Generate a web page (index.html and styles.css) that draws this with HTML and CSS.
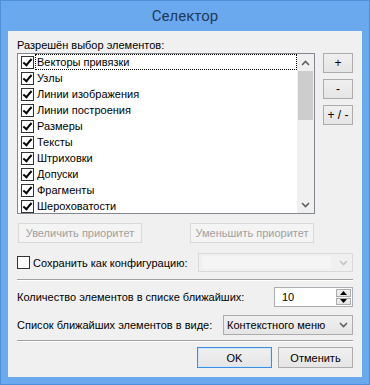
FILE: index.html
```html
<!DOCTYPE html>
<html lang="ru">
<head>
    <meta charset="UTF-8">
    <title>Селектор</title>
    <link rel="stylesheet" href="styles.css">
</head>
<body>

<div class="window">
    <div class="titlebar">Селектор</div>
    <div class="client">
        <div class="caption">Разрешён выбор элементов:</div>

        <div class="list-row">
            <div class="listbox">
                <div class="items">
                    <div class="item focused"><span class="check on"></span><span>Векторы привязки</span></div>
                    <div class="item"><span class="check on"></span><span>Узлы</span></div>
                    <div class="item"><span class="check on"></span><span>Линии изображения</span></div>
                    <div class="item"><span class="check on"></span><span>Линии построения</span></div>
                    <div class="item"><span class="check on"></span><span>Размеры</span></div>
                    <div class="item"><span class="check on"></span><span>Тексты</span></div>
                    <div class="item"><span class="check on"></span><span>Штриховки</span></div>
                    <div class="item"><span class="check on"></span><span>Допуски</span></div>
                    <div class="item"><span class="check on"></span><span>Фрагменты</span></div>
                    <div class="item"><span class="check on"></span><span>Шероховатости</span></div>
                </div>
                <div class="vscroll">
                    <div class="arrow">
                        <svg width="9" height="6" viewBox="0 0 9 6"><path d="M1 5 L4.5 1.5 L8 5" fill="none" stroke="#606060" stroke-width="1.6"/></svg>
                    </div>
                    <div class="track"><div class="thumb"></div></div>
                    <div class="arrow">
                        <svg width="9" height="6" viewBox="0 0 9 6"><path d="M1 1 L4.5 4.5 L8 1" fill="none" stroke="#606060" stroke-width="1.6"/></svg>
                    </div>
                </div>
            </div>
            <div class="side-buttons">
                <button class="btn">+</button>
                <button class="btn">-</button>
                <button class="btn">+ / -</button>
            </div>
        </div>

        <div class="priority-row">
            <button class="btn disabled">Увеличить приоритет</button>
            <button class="btn disabled">Уменьшить приоритет</button>
        </div>

        <div class="config-row">
            <div class="check-label"><span class="check"></span><span>Сохранить как конфигурацию:</span></div>
            <div class="combo disabled">
                <div class="combo-text"></div>
                <svg width="9" height="6" viewBox="0 0 9 6"><path d="M1 1 L4.5 4.5 L8 1" fill="none" stroke="#c4c4c4" stroke-width="1.6"/></svg>
            </div>
        </div>

        <div class="separator"></div>

        <div class="field-row">
            <span>Количество элементов в списке ближайших:</span>
            <div class="spin">
                <div class="spin-value">10</div>
                <div class="spin-buttons">
                    <div class="spin-btn"><svg width="7" height="4" viewBox="0 0 7 4"><path d="M0 4 L3.5 0 L7 4 Z" fill="#000"/></svg></div>
                    <div class="spin-btn"><svg width="7" height="4" viewBox="0 0 7 4"><path d="M0 0 L3.5 4 L7 0 Z" fill="#000"/></svg></div>
                </div>
            </div>
        </div>

        <div class="field-row second">
            <span>Список ближайших элементов в виде:</span>
            <div class="combo">
                <div class="combo-text">Контекстного меню</div>
                <svg width="9" height="6" viewBox="0 0 9 6"><path d="M1 1 L4.5 4.5 L8 1" fill="none" stroke="#606060" stroke-width="1.6"/></svg>
            </div>
        </div>

        <div class="separator bottom"></div>

        <div class="dialog-buttons">
            <button class="btn default">OK</button>
            <button class="btn">Отменить</button>
        </div>
    </div>
</div>

</body>
</html>
```

FILE: styles.css
```css
body {
    margin: 0;
    padding: 0;
    font-family: "Liberation Sans", Arial, sans-serif;
    font-size: 11px;
    color: #000;
}
.window {
    width: 370px;
    height: 385px;
    box-sizing: border-box;
    background-color: #6aa9ee;
    border: 1px solid #4f8fd8;
    padding: 0 7px;
}
.titlebar {
    height: 30px;
    line-height: 30px;
    text-align: center;
    font-family: Roboto, "Liberation Sans", sans-serif;
    font-size: 15px;
    color: #1f3a5a;
}
.client {
    height: 346px;
    box-sizing: border-box;
    background-color: #f0f0f0;
    padding: 6px 9px 0 9px;
}
.caption {
    height: 16px;
    line-height: 16px;
}

/* list with checkboxes */
.list-row {
    display: flex;
    gap: 8px;
}
.listbox {
    width: 298px;
    height: 161px;
    box-sizing: border-box;
    border: 1px solid #828790;
    background-color: #fff;
    display: flex;
    overflow: hidden;
}
.items {
    flex: 1;
}
.item {
    height: 16px;
    display: flex;
    align-items: center;
    padding-left: 3px;
}
.item span:last-child {
    margin-left: 1px;
    padding: 0 1px;
    line-height: 14px;
    flex: 1;
    border: 1px dotted transparent;
}
.item.focused span:last-child {
    border-color: #000;
}
.check {
    width: 13px;
    height: 13px;
    box-sizing: border-box;
    border: 1px solid #333;
    background-color: #fff;
    display: inline-block;
    flex-shrink: 0;
    position: relative;
}
.check.on::after {
    content: "";
    position: absolute;
    left: 3px;
    top: 0px;
    width: 3px;
    height: 7px;
    border: solid #000;
    border-width: 0 2px 2px 0;
    transform: rotate(40deg);
}
.vscroll {
    width: 17px;
    background-color: #f0f0f0;
    display: flex;
    flex-direction: column;
}
.arrow {
    height: 17px;
    display: flex;
    align-items: center;
    justify-content: center;
}
.track {
    flex: 1;
}
.thumb {
    height: 49px;
    margin: 0 1px;
    background-color: #cdcdcd;
}

/* buttons */
.btn {
    font-family: "Liberation Sans", Arial, sans-serif;
    font-size: 11px;
    color: #000;
    height: 20px;
    padding: 0;
    background: linear-gradient(#f0f0f0, #e5e5e5);
    border: 1px solid #acacac;
    border-radius: 0;
    white-space: nowrap;
}
.btn.disabled {
    color: #a0a0a0;
    background: #f4f4f4;
    border-color: #d9d9d9;
}
.btn.default {
    border-color: #3c8fe0;
    box-shadow: inset 0 0 0 1px #cfe6fa;
}
.side-buttons {
    display: flex;
    flex-direction: column;
    gap: 6px;
}
.side-buttons .btn {
    width: 30px;
    font-size: 12px;
}
.priority-row {
    width: 298px;
    box-sizing: border-box;
    display: flex;
    justify-content: space-between;
    margin-top: 9px;
    padding: 0 1px;
}
.priority-row .btn {
    width: 124px;
}

/* save configuration row */
.config-row {
    display: flex;
    align-items: center;
    justify-content: space-between;
    margin-top: 10px;
}
.check-label {
    display: flex;
    align-items: center;
    gap: 3px;
    white-space: nowrap;
}
.combo {
    height: 20px;
    box-sizing: border-box;
    border: 1px solid #acacac;
    background: linear-gradient(#f0f0f0, #e5e5e5);
    display: flex;
    align-items: center;
    padding: 0 4px 0 3px;
    flex-shrink: 0;
}
.combo .combo-text {
    flex: 1;
}
.config-row .combo {
    width: 155px;
    height: 19px;
}
.combo.disabled {
    border-color: #d9d9d9;
    background: #f0f0f0;
}
.combo.disabled .combo-text {
    height: 13px;
    margin-right: 8px;
    background-color: #f5f5f5;
}
.separator {
    margin-top: 7px;
    border-top: 1px solid #a0a0a0;
    border-bottom: 1px solid #fff;
}

/* fields */
.field-row {
    display: flex;
    align-items: center;
    justify-content: space-between;
    margin-top: 6px;
    white-space: nowrap;
}
.field-row.second {
    margin-top: 8px;
}
.spin {
    width: 79px;
    height: 20px;
    box-sizing: border-box;
    border: 1px solid #abadb3;
    background-color: #fff;
    display: flex;
}
.spin-value {
    flex: 1;
    padding-left: 7px;
    line-height: 18px;
}
.spin-buttons {
    width: 15px;
    display: flex;
    flex-direction: column;
    gap: 1px;
    padding: 1px 1px 1px 0;
}
.spin-btn {
    flex: 1;
    border: 1px solid #acacac;
    background: linear-gradient(#f0f0f0, #e5e5e5);
    display: flex;
    align-items: center;
    justify-content: center;
}
.field-row .combo {
    width: 130px;
}
.separator.bottom {
    margin-top: 5px;
}
.dialog-buttons {
    display: flex;
    justify-content: flex-end;
    gap: 6px;
    margin-top: 5px;
}
.dialog-buttons .btn {
    width: 75px;
    height: 21px;
}
```
